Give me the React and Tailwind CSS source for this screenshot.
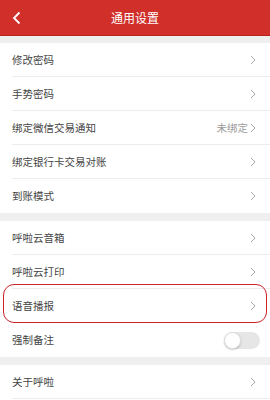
import React from 'react';

const font = { fontFamily: '"Noto Sans CJK SC", "Noto Sans", sans-serif' };

const Chevron = () => (
    <svg width="6" height="10" viewBox="0 0 6 10" className="shrink-0">
        <path d="M1 1 L5 5 L1 9" fill="none" stroke="#a8a8a8" strokeWidth="1" />
    </svg>
);

const Row = ({ label, value, last, children }) => (
    <div className="flex h-[34px] items-center pl-3">
        <div className={`flex h-full flex-1 items-center pr-[14px] ${last ? '' : 'border-b border-[#ececec]'}`}>
            <span className="flex-1 text-[10.5px] text-[#444]">{label}</span>
            {children ? children : (
                <div className="flex items-center gap-[2px]">
                    {value && <span className="text-[10.5px] text-[#9a9a9a]">{value}</span>}
                    <Chevron />
                </div>
            )}
        </div>
    </div>
);

const Toggle = () => (
    <div className="relative -mr-[4px] h-[17px] w-[36px] rounded-full bg-[#e6e6e6]">
        <div className="absolute left-0 top-0 h-[17px] w-[17px] rounded-full border border-[#dedede] bg-white shadow-[0_1px_2px_rgba(0,0,0,0.2)]" />
    </div>
);

const App = () => {
    return (
        <div className="h-[400px] w-[270px] overflow-hidden bg-white" style={font}>
            {/* Header */}
            <div className="relative flex h-[36px] items-center justify-center bg-[#d02f2a] border-b border-[#b8231f]">
                <svg width="10" height="14" viewBox="0 0 10 14" className="absolute left-[12px] top-[11px]">
                    <path d="M7.5 1.5 L2 7 L7.5 12.5" fill="none" stroke="#fff" strokeWidth="1.8" />
                </svg>
                <span className="text-[12px] text-white">通用设置</span>
            </div>
            <div className="h-[7px] bg-[#efefef]" />

            <Row label="修改密码" />
            <Row label="手势密码" />
            <Row label="绑定微信交易通知" value="未绑定" />
            <Row label="绑定银行卡交易对账" />
            <Row label="到账模式" last />

            <div className="h-[8px] bg-[#efefef]" />

            <Row label="呼啦云音箱" />
            <Row label="呼啦云打印" />
            <div className="relative">
                <Row label="语音播报" last />
                <div className="pointer-events-none absolute left-[3px] right-[3px] top-[-5px] bottom-[0px] rounded-[11px] border-[1.5px] border-[#c8232a]" />
            </div>
            <Row label="强制备注" last>
                <Toggle />
            </Row>

            <div className="h-[8px] bg-[#efefef]" />

            <Row label="关于呼啦" />
        </div>
    );
};

export default App;
